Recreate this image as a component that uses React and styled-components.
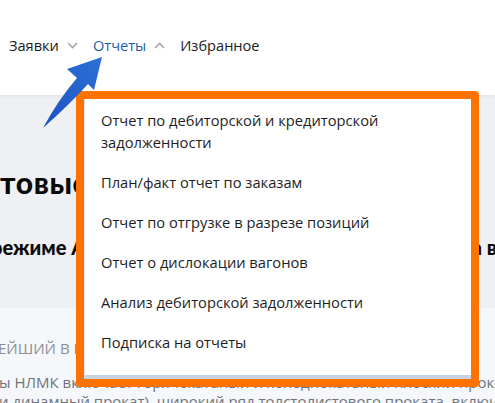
import React from 'react'
import styled, { createGlobalStyle } from 'styled-components'

const GlobalStyle = createGlobalStyle`
  html, body {
    margin: 0;
    padding: 0;
    background: #f5f7fb;
    font-family: "Open Sans", "Liberation Sans", sans-serif;
  }
`;

const Page = styled.div`
  position: relative;
  width: 495px;
  height: 403px;
  overflow: hidden;
  display: flex;
  flex-direction: column;
  background: #f5f7fb;
`;

const Header = styled.header`
  height: 95px;
  flex-shrink: 0;
  background: #fff;
  box-shadow: 0 1px 4px rgba(30, 40, 60, 0.08);
  position: relative;
  z-index: 1;
  display: flex;
  align-items: flex-start;
  padding: 35px 0 0 9px;
  box-sizing: border-box;
`;

const Nav = styled.nav`
  display: flex;
  align-items: center;
  height: 20px;
`;

const NavItem = styled.span`
  display: flex;
  align-items: center;
  gap: 8px;
  margin-right: 15px;
  font-size: 14.6px;
  color: ${p => (p.$active ? '#1c5ea8' : '#1b1b1b')};
  white-space: nowrap;
`;

const Chevron = ({ up }) => (
  <svg width="11" height="7" viewBox="0 0 11 7">
    <path
      d={up ? 'M1 6 L5.5 1.5 L10 6' : 'M1 1 L5.5 5.5 L10 1'}
      fill="none"
      stroke="#a4a8ae"
      strokeWidth="1.6"
    />
  </svg>
);

const Hero = styled.section`
  height: 213px;
  flex-shrink: 0;
  background: #eef0f4;
  display: flex;
  flex-direction: column;
  padding-top: 69px;
  box-sizing: border-box;
  white-space: nowrap;
`;

const Title = styled.h1`
  margin: 0;
  font-family: "Lato", sans-serif;
  font-weight: 900;
  font-size: 30px;
  line-height: 36px;
  color: #0a0a0a;
  letter-spacing: 0.6px;
`;

const Subtitle = styled.h2`
  margin: 34px 0 0 -9px;
  font-family: "Lato", sans-serif;
  font-weight: 900;
  font-size: 20px;
  line-height: 26px;
  color: #0a0a0a;
`;

const Content = styled.section`
  padding-top: 30px;
  white-space: nowrap;
`;

const Kicker = styled.div`
  font-size: 15px;
  line-height: 20px;
  text-transform: uppercase;
  color: #8b8f95;
  margin-left: -2px;
`;

const Para = styled.p`
  margin: 15px 0 0 -1px;
  font-size: 15px;
  line-height: 19px;
  color: #70747a;
`;

const Frame = styled.div`
  position: absolute;
  left: 76px;
  top: 91px;
  width: 403px;
  height: 296px;
  box-sizing: border-box;
  border: 8px solid #ff7200;
  border-radius: 4px;
  z-index: 3;
  background: #fff;
`;

const Menu = styled.ul`
  list-style: none;
  margin: 0;
  height: 100%;
  box-sizing: border-box;
  padding: 1px 0 0;
  background: #fff;
  border-left: 1px solid #dbe5f1;
  border-bottom: 4px solid #c6d3e3;
`;

const MenuItem = styled.li`
  padding: 9px 16px;
  font-size: 14.7px;
  line-height: 22px;
  color: #1e1e1e;
`;

const Arrow = styled.svg`
  position: absolute;
  left: 0;
  top: 0;
  z-index: 4;
  pointer-events: none;
`;

const items = [
  <>Отчет по дебиторской и кредиторской<br />задолженности</>,
  'План/факт отчет по заказам',
  'Отчет по отгрузке в разрезе позиций',
  'Отчет о дислокации вагонов',
  'Анализ дебиторской задолженности',
  'Подписка на отчеты',
];

const App = () => {
  return (
    <>
      <GlobalStyle />
      <Page>
        <Header>
          <Nav>
            <NavItem>Заявки <Chevron /></NavItem>
            <NavItem $active>Отчеты <Chevron up /></NavItem>
            <NavItem>Избранное</NavItem>
          </Nav>
        </Header>
        <Hero>
          <Title>товые решения для бизнеса</Title>
          <Subtitle>режиме АСУ ТП и электронного документооборота в онлайн режиме</Subtitle>
        </Hero>
        <Content>
          <Kicker>ейший в России производитель стали</Kicker>
          <Para>
            ы НЛМК включает горячекатаный и холоднокатаный плоский прокат, прок<br />
            и динамный прокат), широкий ряд толстолистового проката, включая промиальный
          </Para>
        </Content>

        <Frame>
          <Menu>
            {items.map((it, i) => (
              <MenuItem key={i}>{it}</MenuItem>
            ))}
          </Menu>
        </Frame>

        <Arrow width="495" height="403" viewBox="0 0 495 403">
          <defs>
            <linearGradient id="arrowGrad" x1="43" y1="128" x2="102" y2="58" gradientUnits="userSpaceOnUse">
              <stop offset="0" stopColor="#1d52c0" />
              <stop offset="1" stopColor="#2c70d6" />
            </linearGradient>
          </defs>
          <path
            d="M43 128 Q58 100 77 78 L67 69 L102 57 L94 90 L88 84 Q68 106 43 128 Z"
            fill="url(#arrowGrad)"
          />
        </Arrow>
      </Page>
    </>
  )
}

export default App
